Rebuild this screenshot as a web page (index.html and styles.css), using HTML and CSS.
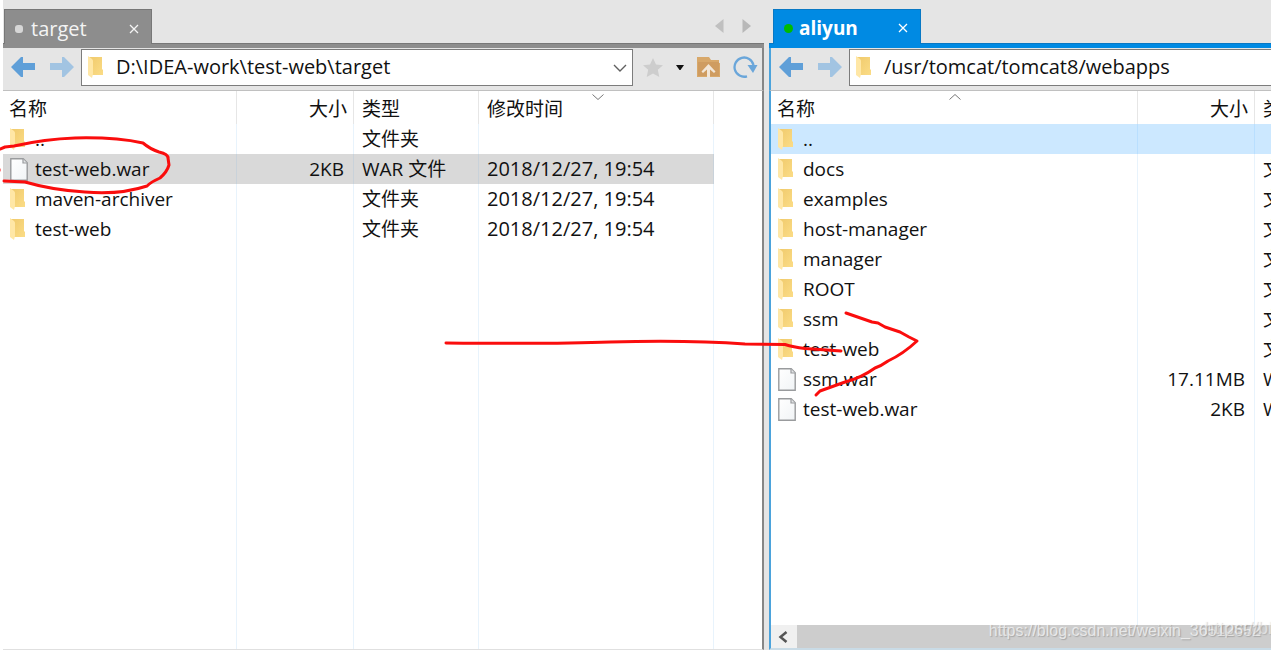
FILE: index.html
```html
<!DOCTYPE html>
<html lang="zh-CN">
<head>
<meta charset="utf-8">
<title>File transfer</title>
<link rel="stylesheet" href="styles.css">
</head>
<body>
<svg class="defs" aria-hidden="true">
  <defs>
    <linearGradient id="gold" x1="0" y1="0" x2="1" y2="1"><stop offset="0" stop-color="#f0ca6c"/><stop offset="1" stop-color="#fbdc86"/></linearGradient>
    <linearGradient id="sheet" x1="0" y1="0" x2="1" y2="1"><stop offset="0" stop-color="#ffffff"/><stop offset="1" stop-color="#f1f4f6"/></linearGradient>
    <symbol id="folder" viewBox="0 0 16 22"><path d="M1 1h13v12l1 1v5H1z" fill="url(#gold)"/><path d="M0 0l4 3q1 1 1 2v13l-1 4-4-3z" fill="#ffe7a6"/></symbol>
    <symbol id="file" viewBox="0 0 18 23"><path d="M.8.8h12.4l4 4v17.4H.8z" fill="url(#sheet)" stroke="#999b9d" stroke-width="1.4"/><path d="M13 1v4h4" fill="#e4e6e8" stroke="#999b9d" stroke-width="1.2"/></symbol>
    <symbol id="back" viewBox="0 0 24 20"><path d="M0 10L10 0h2v6h12v7H12v7h-2z" fill="#5f9fd8"/></symbol>
    <symbol id="forward" viewBox="0 0 24 20"><path d="M24 10L14 0h-2v6H0v7h12v7h2z" fill="#a2c4e2"/></symbol>
    <symbol id="cross" viewBox="0 0 10 10"><path d="M1 1l8 8M9 1L1 9" stroke="currentColor" stroke-width="1.3"/></symbol>
  </defs>
</svg>
<main class="panes">
  <section class="pane local">
    <div class="tabs">
      <div class="tab"><span class="dot"></span><span class="tab-name">target</span><button class="close" aria-label="Close target"><svg width="10" height="10"><use href="#cross"/></svg></button></div>
      <div class="tab-scroll">
        <button aria-label="Previous tab"><svg width="9" height="14"><path d="M8.500 0v14L0 7z" fill="#c0c0c0"/></svg></button>
        <button aria-label="Next tab"><svg width="9" height="14"><path d="M.5 0v14L9 7z" fill="#b8b8b8"/></svg></button>
      </div>
    </div>
    <div class="toolbar">
      <button aria-label="Back"><svg width="24" height="20"><use href="#back"/></svg></button>
      <button aria-label="Forward"><svg width="24" height="20"><use href="#forward"/></svg></button>
      <div class="address">
        <svg class="address-icon" width="16" height="22"><use href="#folder"/></svg>
        <select aria-label="Local path"><option>D:\IDEA-work\test-web\target</option></select>
        <svg class="address-arrow" width="14" height="8"><path d="M1 1l6 6 6-6" fill="none" stroke="#606060" stroke-width="1.400"/></svg>
      </div>
      <div class="tools">
        <button aria-label="Bookmark"><svg width="20" height="19"><path d="M10 0l3 6.500 7 .7-5.200 4.600 1.500 7.200-6.300-3.600L3.700 19l1.500-7.200L0 7.200l7-.7z" fill="#cdcdcd"/></svg></button>
        <button aria-label="Bookmark list"><svg width="8" height="5"><path d="M0 0h8L4.500 5h-1z" fill="#111"/></svg></button>
        <button aria-label="Parent folder"><svg width="23" height="21"><path d="M0 0h12l2 3h8v3h1v14H0z" fill="#d8a86a"/><path d="M1 5h21v14H1z" fill="#cf9c60"/><path d="M11.500 7l7 7.500-1.500 1.500-4-3.500V20h-3v-7.500L6 16l-1.500-1.500z" fill="#f2e6d7"/></svg></button>
        <button aria-label="Refresh"><svg width="25" height="22"><path d="M14 20.300A9.600 9.600 0 1 1 20.500 9" fill="none" stroke="#6aa6da" stroke-width="2.300"/><path d="M14.500 9h10L20 17z" fill="#6aa6da"/></svg></button>
      </div>
    </div>
    <div class="list">
      <svg class="sort" width="12" height="6"><path d="M.5.500L6 5.500 11.500.500" fill="none" stroke="#777"/></svg>
      <table>
        <colgroup><col class="name"><col class="size"><col class="type"><col class="date"></colgroup>
        <thead><tr><th>名称</th><th class="num">大小</th><th>类型</th><th>修改时间</th></tr></thead>
        <tbody>
          <tr><td><span class="entry"><svg width="16" height="22"><use href="#folder"/></svg>..</span></td><td></td><td>文件夹</td><td></td></tr>
          <tr class="selected"><td><span class="entry"><svg width="18" height="23"><use href="#file"/></svg>test-web.war</span></td><td class="num">2KB</td><td>WAR 文件</td><td class="time">2018/12/27, 19:54</td></tr>
          <tr><td><span class="entry"><svg width="16" height="22"><use href="#folder"/></svg>maven-archiver</span></td><td></td><td>文件夹</td><td class="time">2018/12/27, 19:54</td></tr>
          <tr><td><span class="entry"><svg width="16" height="22"><use href="#folder"/></svg>test-web</span></td><td></td><td>文件夹</td><td class="time">2018/12/27, 19:54</td></tr>
          <tr class="rest"><td></td><td></td><td></td><td></td></tr>
        </tbody>
      </table>
    </div>
  </section>
  <section class="pane remote">
    <div class="tabs">
      <div class="tab"><span class="dot"></span><span class="tab-name">aliyun</span><button class="close" aria-label="Close aliyun"><svg width="10" height="10"><use href="#cross"/></svg></button></div>
    </div>
    <div class="toolbar">
      <button aria-label="Back"><svg width="24" height="20"><use href="#back"/></svg></button>
      <button aria-label="Forward"><svg width="24" height="20"><use href="#forward"/></svg></button>
      <div class="address">
        <svg class="address-icon" width="16" height="22"><use href="#folder"/></svg>
        <select aria-label="Remote path"><option>/usr/tomcat/tomcat8/webapps</option></select>
      </div>
    </div>
    <div class="list">
      <svg class="sort" width="12" height="6"><path d="M.5 5.500L6 .5l5.500 5" fill="none" stroke="#777"/></svg>
      <table>
        <colgroup><col class="name"><col class="size"><col class="type"></colgroup>
        <thead><tr><th>名称</th><th class="num">大小</th><th>类型</th></tr></thead>
        <tbody>
          <tr class="selected"><td><span class="entry"><svg width="16" height="22"><use href="#folder"/></svg>..</span></td><td></td><td></td></tr>
          <tr><td><span class="entry"><svg width="16" height="22"><use href="#folder"/></svg>docs</span></td><td></td><td>文件夹</td></tr>
          <tr><td><span class="entry"><svg width="16" height="22"><use href="#folder"/></svg>examples</span></td><td></td><td>文件夹</td></tr>
          <tr><td><span class="entry"><svg width="16" height="22"><use href="#folder"/></svg>host-manager</span></td><td></td><td>文件夹</td></tr>
          <tr><td><span class="entry"><svg width="16" height="22"><use href="#folder"/></svg>manager</span></td><td></td><td>文件夹</td></tr>
          <tr><td><span class="entry"><svg width="16" height="22"><use href="#folder"/></svg>ROOT</span></td><td></td><td>文件夹</td></tr>
          <tr><td><span class="entry"><svg width="16" height="22"><use href="#folder"/></svg>ssm</span></td><td></td><td>文件夹</td></tr>
          <tr><td><span class="entry"><svg width="16" height="22"><use href="#folder"/></svg>test-web</span></td><td></td><td>文件夹</td></tr>
          <tr><td><span class="entry"><svg width="18" height="23"><use href="#file"/></svg>ssm.war</span></td><td class="num">17.11MB</td><td>WAR 文件</td></tr>
          <tr><td><span class="entry"><svg width="18" height="23"><use href="#file"/></svg>test-web.war</span></td><td class="num">2KB</td><td>WAR 文件</td></tr>
          <tr class="rest"><td></td><td></td><td></td></tr>
        </tbody>
      </table>
    </div>
    <div class="scrollbar"><button aria-label="Scroll left"><svg width="10" height="12"><path d="M8.500 1L2.500 6l6 5" fill="none" stroke="#555" stroke-width="2.500"/></svg></button><div class="thumb"></div></div>
  </section>
</main>
<svg class="ink" width="920" height="400" aria-hidden="true">
  <path d="M0 149L5 147 14 146Q45 139 75 138Q115 137 143 143Q150 149 159 152Q168 154 168 158L169 165Q167 172 160 178Q151 182 147 186Q120 195 85 192Q52 190 25 182L4 181"/>
  <path d="M0 169v2" stroke-width="1"/>
  <path d="M446 343Q560 344 610 342Q690 340 745 344L785 344.500Q793 347 805 348.500L841 351"/>
  <path d="M846 313L872 322 878 323 885 327 900 332 909 337 917 341Q903 354 888 361Q881 366 875 368Q861 378 845 382L820 391 816 395"/>
</svg>
<div class="watermark mark-main">https://blog.csdn.net/weixin_36512652</div>
<div class="watermark mark-edge">https://blog</div>
</body>
</html>
```
FILE: styles.css
```css
* { box-sizing: border-box; }
html, body { height: 100%; }
body {
  margin: 0;
  padding-left: 3px;
  overflow: hidden;
  background: #fff;
  color: #111;
  font: 19px/30px "Open Sans", "Noto Sans CJK SC", sans-serif;
}
svg { display: block; flex: none; }
button { display: flex; padding: 0; border: 0; background: none; color: inherit; }
.defs { position: absolute; width: 0; height: 0; }

.panes {
  display: grid;
  grid-template-columns: minmax(0, 761fr) minmax(0, 502fr);
  column-gap: 5px;
  height: 100%;
  padding-top: 9px;
  background: #e5e5e5;
}
.pane { display: flex; flex-direction: column; min-width: 0; overflow: hidden; }
.local { --accent: #8d8d8d; --edge: #777; }
.remote { --accent: #008ae3; --edge: #0878c4; }

.tabs { display: flex; height: 39px; flex: none; border-bottom: 5px solid var(--accent); position: relative; }
.tabs::after { content: ""; position: absolute; left: 0; right: 0; bottom: -1px; height: 1px; background: var(--edge); }
.tab {
  display: flex;
  align-items: center;
  width: 148px;
  height: 35px;
  margin-left: 1px;
  padding: 4px 12px 0 10px;
  border: 1px solid var(--edge);
  border-bottom: 0;
  background: var(--accent);
  color: #f4f4f4;
  position: relative;
  z-index: 1;
}
.remote .tab { margin-left: 4px; padding-top: 2px; color: #fff; font-weight: bold; }
.dot { width: 8px; height: 8px; border-radius: 3px; background: #d6d6d6; }
.remote .dot { width: 9px; height: 9px; border-radius: 50%; background: #0b0; }
.tab-name { margin-left: 8px; }
.local .tab-name { font-size: 20px; }
.remote .tab-name { margin-left: 6px; }
.close { margin-left: auto; }
.tab-scroll { display: flex; align-items: center; gap: 18px; margin-left: auto; padding-right: 13px; }

.toolbar {
  display: flex;
  align-items: center;
  flex: none;
  height: 43px;
  padding: 0 8px 4px;
  gap: 15px;
  border: solid #c0c0c0;
  border-width: 0 0 1px;
}
.local .toolbar, .local .list { border-right: 2px solid #868686; }
.remote .toolbar, .remote .list, .scrollbar { border-left: 2px solid #4ba3dc; }
.remote .toolbar { padding-right: 0; }
.address { position: relative; flex: 1; min-width: 0; margin-left: -8px; }
.remote .address { margin-right: -2px; }
select {
  appearance: none;
  display: block;
  width: 100%;
  height: 37px;
  padding: 0 34px;
  border: 1px solid #7c7c7c;
  border-radius: 0;
  background: #fff;
  color: #111;
  font: inherit;
  font-size: 20px;
}
.address-icon { position: absolute; left: 7px; top: 7px; }
.address-arrow { position: absolute; right: 6px; top: 15px; }
.tools { display: flex; align-items: center; gap: 13px; margin-left: -5px; margin-right: -4px; }

.list { flex: 1; min-height: 0; background: #fff; overflow: hidden; position: relative; }
.local .list { border-bottom: 1px solid #e0e0e0; }
.sort { position: absolute; top: 3px; left: 589px; }
.remote .sort { left: 178px; }
table { height: 100%; table-layout: fixed; border-collapse: separate; border-spacing: 0; }
.local table { width: 711px; }
.remote table { width: 608px; }
.name { width: 234px; }
.remote .name { width: 367px; }
.size { width: 117px; }
.type { width: 125px; }
.date { width: 235px; }
th, td { height: 30px; padding: 0 7px 0 8px; border-right: 1px solid #e8f3fc; text-align: left; font-weight: normal; white-space: nowrap; }
td:first-child { padding-left: 7px; }
th { height: 33px; padding-top: 2px; border-color: #e6e6e6; }
th:first-child { padding-left: 6px; }
td.num { padding-right: 9px; }
th.num { padding-right: 6px; }
.num { text-align: right; }
.time { font-size: 20px; }
.entry { display: flex; align-items: center; height: 30px; }
.entry svg { margin-right: 9px; }
.entry svg[width="18"] { margin-right: 7px; }
.local .selected td { background: #d9d9d9; border-color: #c9d2da; }
.remote .selected td { background: #cce8ff; border-color: #b9dfff; }
.rest td { height: auto; }

.scrollbar { display: flex; flex: none; height: 25px; border-bottom: 2px solid #c9dbe6; background: #f0f0f0; }
.scrollbar button { width: 26px; padding-right: 3px; align-items: center; justify-content: center; }
.thumb { flex: 1; background: #cdcdcd; }

.ink { position: absolute; left: 0; top: 0; fill: none; stroke: #fa0d0d; stroke-width: 3; stroke-linecap: round; stroke-linejoin: round; pointer-events: none; }
.watermark { position: absolute; color: rgba(255, 255, 255, .65); font: 16px/20px "Liberation Sans", Arial, sans-serif; text-shadow: 1px 1px 1px rgba(110, 110, 110, .4); white-space: nowrap; }
.mark-main { right: 10px; bottom: 9px; }
.mark-edge { left: 1204px; bottom: 12px; width: 67px; overflow: hidden; font-size: 18px; opacity: .7; }
```
